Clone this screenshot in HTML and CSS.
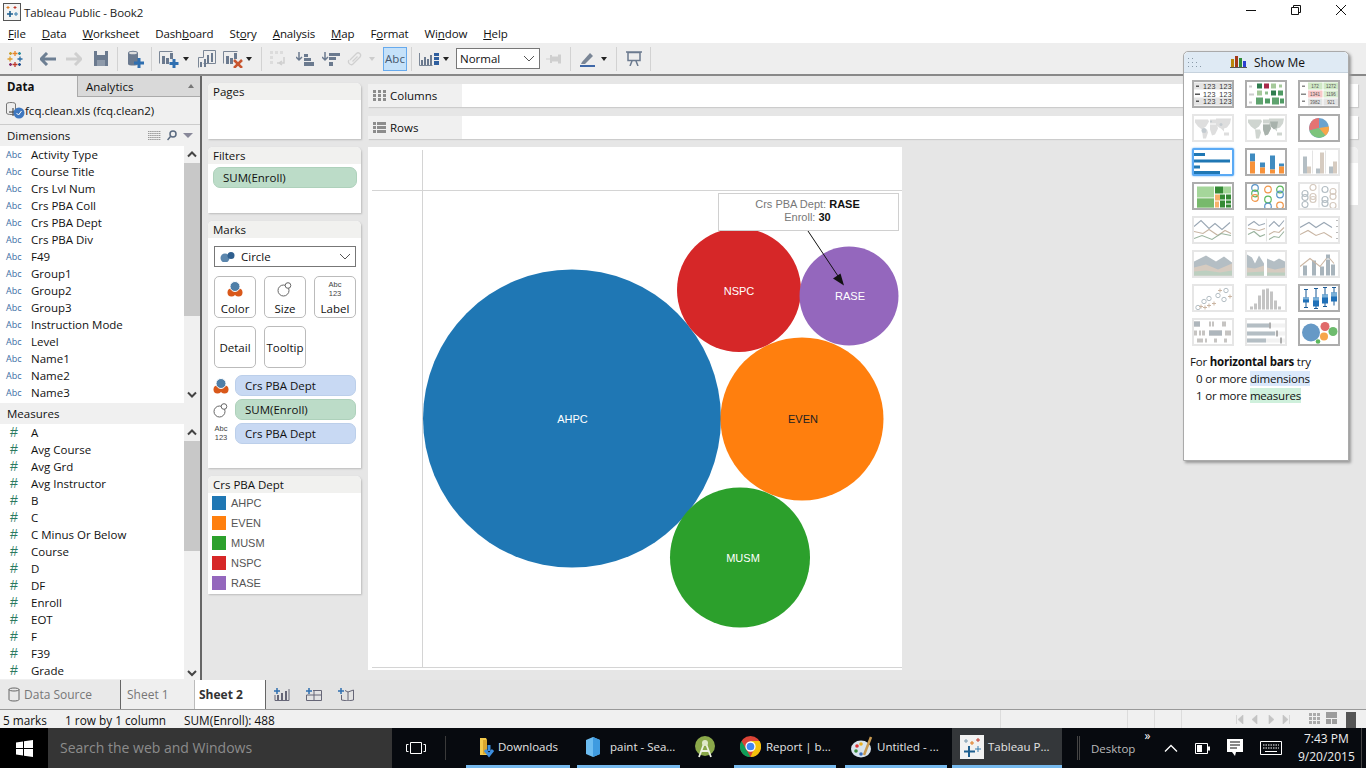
FILE: index.html
```html
<!DOCTYPE html>
<html lang="en">
<head>
<meta charset="utf-8">
<title>Tableau Public - Book2</title>
<link rel="stylesheet" href="styles.css">
</head>
<body>
<div class="app">
  <header class="titlebar">
    <svg class="app-icon" width="18" height="18" viewBox="0 0 18 18"><rect x=".5" y=".5" width="17" height="17" fill="#f4f4f4" stroke="#555"/><path d="M7 8v6M4 11h6" stroke="#1f5f8f" stroke-width="1.6"/><path d="M13 9v4M11 11h4" stroke="#3a7fb0"/><path d="M5 3v3M3.500 4.500h3" stroke="#e07b20"/><path d="M12 3v3M10.500 4.500h3" stroke="#c0392b"/></svg>
    <span class="title-text">Tableau Public - Book2</span>
    <div class="win-controls">
      <svg width="12" height="12" viewBox="0 0 12 12"><path d="M1 6.500h10" stroke="#111"/></svg>
      <svg width="12" height="12" viewBox="0 0 12 12"><path d="M1.500 3.500h7v7h-7zM3.500 3.500v-2h7v7h-2" fill="none" stroke="#111"/></svg>
      <svg width="12" height="12" viewBox="0 0 12 12"><path d="M1 1l10 10M11 1L1 11" stroke="#111"/></svg>
    </div>
  </header>
  <nav class="menubar">
    <span><u>F</u>ile</span><span><u>D</u>ata</span><span><u>W</u>orksheet</span><span>Dash<u>b</u>oard</span><span>St<u>o</u>ry</span><span><u>A</u>nalysis</span><span><u>M</u>ap</span><span>F<u>o</u>rmat</span><span>Wi<u>n</u>dow</span><span><u>H</u>elp</span>
  </nav>
  <div class="toolbar">
    <svg class="m7" width="16" height="16" viewBox="0 0 16 16" stroke-width="1.300"><path d="M8 0v5M5.500 2.500h5" stroke="#e8862a"/><path d="M8 11v5M5.500 13.500h5" stroke="#c0392b"/><path d="M3 5.500v5M.5 8h5" stroke="#e0a030"/><path d="M13 5.500v5M10.500 8h5" stroke="#2b6ca3"/><path d="M3.500 1v3M2 2.500h3" stroke="#c8a030"/><path d="M12.500 1v3M11 2.500h3" stroke="#2f8f9f"/><path d="M3.500 12v3M2 13.500h3" stroke="#8a2f6f"/><path d="M12.500 12v3M11 13.500h3" stroke="#1f4f8f"/></svg>
    <i class="sep m8"></i>
    <svg class="m8" width="16" height="14" viewBox="0 0 16 14"><path d="M7 1L1 7l6 6M1.500 7H16" fill="none" stroke="#6d7f93" stroke-width="3"/></svg>
    <svg class="m10" width="16" height="14" viewBox="0 0 16 14"><path d="M9 1l6 6-6 6M14.500 7H0" fill="none" stroke="#cfcfcf" stroke-width="3"/></svg>
    <svg class="m11" width="16" height="15" viewBox="0 0 16 15"><path d="M1 0h14v15H1z" fill="#6b7a8f"/><path d="M4 0h8v4H4z" fill="#eee"/><path d="M4 9h8v6H4z" fill="#8f9bab"/></svg>
    <i class="sep m8"></i>
    <svg class="m10" width="16" height="18" viewBox="0 0 16 18"><path d="M0 3c0-3 10-3 10 0v11c0 2-10 2-10 0z" fill="#6b7a8f"/><ellipse cx="5" cy="3" rx="4" ry="1.300" fill="#ddd"/><path d="M11 8v10M6 13h10" stroke="#2f6fb0" stroke-width="3"/></svg>
    <i class="sep m7"></i>
    <svg class="m7" width="20" height="18" viewBox="0 0 20 18"><path d="M.5 13.500V1.500h13" fill="none" stroke="#7a8696"/><path d="M3 6h3v8H3zM7 8h3v6H7zM11 3h3v6h-3z" fill="#6b7a8f"/><path d="M15 9v9M10.500 13.500h9" stroke="#2f6fb0" stroke-width="3"/></svg>
    <b class="dd m4"></b>
    <svg class="m9" width="18" height="18" viewBox="0 0 18 18"><path d="M.5 17.500v-10h5M5.500 7.500v-7h12v13h-12" fill="none" stroke="#7a8696"/><path d="M2 12h2v5H2zM6 9h2v8H6zM9 5h2v8H9zM13 3h2v9h-2z" fill="#6b7a8f"/></svg>
    <svg class="m7" width="20" height="18" viewBox="0 0 20 18"><path d="M.5 13.500V1.500h14" fill="none" stroke="#7a8696"/><path d="M3 6h3v8H3zM7 8h3v6H7zM11 3h3v6h-3z" fill="#6b7a8f"/><path d="M11 10l8 8M19 10l-8 8" stroke="#c8552f" stroke-width="2.500"/></svg>
    <b class="dd m3"></b>
    <i class="sep m9"></i>
    <svg class="m8" width="16" height="16" viewBox="0 0 16 16"><path d="M0 0h3v3H0zM5 0h3v3H5zM0 5h3v3H0zM0 10h3v3H0zM10 0h3v3h-3z" fill="#dcdcdc"/><path d="M14 6v6h-7M12 14l-3-2 3-2" fill="none" stroke="#cfcfcf" stroke-width="1.500"/></svg>
    <svg class="m10" width="18" height="14" viewBox="0 0 18 14"><path d="M3 0v8M0 5l3 3 3-3" fill="none" stroke="#6b7a8f" stroke-width="1.500"/><path d="M8 2h4v3H8zM8 6h7v3H8zM8 10h10v4H8z" fill="#6b7a8f"/></svg>
    <svg class="m8" width="18" height="14" viewBox="0 0 18 14"><path d="M3 0v8M0 5l3 3 3-3" fill="none" stroke="#6b7a8f" stroke-width="1.500"/><path d="M7 1h11v3H7zM7 5h7v3H7zM7 10h4v4H7z" fill="#6b7a8f"/></svg>
    <svg class="m7" width="15" height="16" viewBox="0 0 15 16"><path d="M3 9l6.500-6.500c2-2 5.500 1 3.500 3.500L6 13c-2 2-6-1-4-4M5.500 10.500l5-5" fill="none" stroke="#d0d0d0" stroke-width="1.300"/></svg>
    <b class="dd dd-off m7"></b>
    <span class="abc-btn m8">Abc</span>
    <i class="sep m4"></i>
    <svg class="m7" width="20" height="14" viewBox="0 0 20 14"><path d="M.5 1v12.500h13" fill="none" stroke="#7a8696"/><path d="M2 8h2v5H2zM5 5h2v8H5zM8 7h2v6H8zM11 3h2v10h-2z" fill="#6b7a8f"/><path d="M15 1h5v3h-5zM15 5h5v3h-5zM15 9h5v4h-5z" fill="#2f5f9f"/></svg>
    <b class="dd m4"></b>
    <div class="normal-select m7"><span>Normal</span><svg width="12" height="7" viewBox="0 0 12 7"><path d="M1 1l5 5 5-5" fill="none" stroke="#555"/></svg></div>
    <svg class="m6" width="15" height="10" viewBox="0 0 15 10"><path d="M0 4.500h4v1H0zM4 1h2v8H4zM6 2.500h6v5H6zM12 .5h3v9h-3z" fill="#cfcfcf"/></svg>
    <i class="sep m9"></i>
    <svg class="m9" width="16" height="16" viewBox="0 0 16 16"><path d="M2 11L10 2l3 3-8 8H1z" fill="#7a8696"/><path d="M0 15h15" stroke="#3f68a8" stroke-width="2"/></svg>
    <b class="dd m5"></b>
    <i class="sep m9"></i>
    <svg class="m9" width="16" height="15" viewBox="0 0 16 15"><path d="M0 1h16M2 1.500h12v8H2zM4 15l2-5M12 15l-2-5" fill="none" stroke="#6b7a8f" stroke-width="1.500"/></svg>
    <i class="sep m8"></i>
  </div>

  <main class="workspace">
    <aside class="data-pane">
      <div class="pane-tabs">
        <span class="pane-tab on">Data</span>
        <span class="pane-tab off">Analytics<i class="updown"></i></span>
      </div>
      <div class="source">
        <svg width="19" height="17" viewBox="0 0 19 17"><path d="M.5 11V2c0-2 9-2 9 0v9c0 2-9 2-9 0z" fill="#eee" stroke="#777"/><path d="M3 10h8M7 6v8" stroke="#333"/><circle cx="13" cy="11" r="5.500" fill="#3f78c0"/><path d="M10.500 11l2 2 3-4" fill="none" stroke="#fff"/></svg>
        <span>fcq.clean.xls (fcq.clean2)</span>
      </div>
      <div class="section-head">
        <span>Dimensions</span>
        <div class="head-tools">
          <svg width="13" height="9" viewBox="0 0 13 9"><path d="M0 .5h13M0 2.500h13M0 4.500h13M0 6.500h13M0 8.500h13" stroke="#999" stroke-dasharray="1.500 .6"/></svg>
          <svg width="10" height="11" viewBox="0 0 10 11"><circle cx="6" cy="4" r="3" fill="none" stroke="#5a6a80" stroke-width="1.500"/><path d="M3.500 6.500L.5 10" stroke="#5a6a80" stroke-width="1.500"/></svg>
          <b class="dd dd-gray"></b>
        </div>
      </div>
      <div class="list-wrap dims">
        <ul class="field-list">
          <li><span class="ty abc">Abc</span>Activity Type</li>
          <li><span class="ty abc">Abc</span>Course Title</li>
          <li><span class="ty abc">Abc</span>Crs Lvl Num</li>
          <li><span class="ty abc">Abc</span>Crs PBA Coll</li>
          <li><span class="ty abc">Abc</span>Crs PBA Dept</li>
          <li><span class="ty abc">Abc</span>Crs PBA Div</li>
          <li><span class="ty abc">Abc</span>F49</li>
          <li><span class="ty abc">Abc</span>Group1</li>
          <li><span class="ty abc">Abc</span>Group2</li>
          <li><span class="ty abc">Abc</span>Group3</li>
          <li><span class="ty abc">Abc</span>Instruction Mode</li>
          <li><span class="ty abc">Abc</span>Level</li>
          <li><span class="ty abc">Abc</span>Name1</li>
          <li><span class="ty abc">Abc</span>Name2</li>
          <li><span class="ty abc">Abc</span>Name3</li>
        </ul>
        <div class="scrollbar">
          <svg class="sb-arrow" width="16" height="17" viewBox="0 0 16 17"><path d="M4 10.500l4-4 4 4" fill="none" stroke="#444" stroke-width="2"/></svg>
          <div class="thumb thumb-dim"></div>
          <svg class="sb-arrow sb-end" width="16" height="17" viewBox="0 0 16 17"><path d="M4 6.500l4 4 4-4" fill="none" stroke="#444" stroke-width="2"/></svg>
        </div>
      </div>
      <div class="section-head"><span>Measures</span></div>
      <div class="list-wrap meas">
        <ul class="field-list">
          <li><span class="ty hash">#</span>A</li>
          <li><span class="ty hash">#</span>Avg Course</li>
          <li><span class="ty hash">#</span>Avg Grd</li>
          <li><span class="ty hash">#</span>Avg Instructor</li>
          <li><span class="ty hash">#</span>B</li>
          <li><span class="ty hash">#</span>C</li>
          <li><span class="ty hash">#</span>C Minus Or Below</li>
          <li><span class="ty hash">#</span>Course</li>
          <li><span class="ty hash">#</span>D</li>
          <li><span class="ty hash">#</span>DF</li>
          <li><span class="ty hash">#</span>Enroll</li>
          <li><span class="ty hash">#</span>EOT</li>
          <li><span class="ty hash">#</span>F</li>
          <li><span class="ty hash">#</span>F39</li>
          <li><span class="ty hash">#</span>Grade</li>
        </ul>
        <div class="scrollbar">
          <svg class="sb-arrow" width="16" height="17" viewBox="0 0 16 17"><path d="M4 10.500l4-4 4 4" fill="none" stroke="#444" stroke-width="2"/></svg>
          <div class="thumb thumb-meas"></div>
          <svg class="sb-arrow sb-end" width="16" height="12" viewBox="0 0 16 12"><path d="M4 4l4 4 4-4" fill="none" stroke="#444" stroke-width="2"/></svg>
        </div>
      </div>
    </aside>

    <section class="cards">
      <div class="card card-pages"><h3>Pages</h3></div>
      <div class="card card-filters"><h3>Filters</h3><div class="pill green pill-filter">SUM(Enroll)</div></div>
      <div class="card card-marks">
        <h3>Marks</h3>
        <div class="mark-select">
          <svg width="15" height="10" viewBox="0 0 15 10"><circle cx="5" cy="6" r="4.500" fill="#5b86ad"/><circle cx="11" cy="3.500" r="3.500" fill="#2f5f8f"/></svg>
          <span>Circle</span>
          <svg class="chev" width="12" height="7" viewBox="0 0 12 7"><path d="M1 1l5 5 5-5" fill="none" stroke="#555"/></svg>
        </div>
        <div class="mark-buttons">
          <div class="mbtn">
            <svg width="16" height="16" viewBox="0 0 16 16"><circle cx="4.500" cy="11.500" r="4" fill="#d9581a"/><circle cx="11.500" cy="11.500" r="4" fill="#d9581a"/><circle cx="8" cy="5.500" r="5" fill="#4f7fa8" stroke="#fff"/></svg>
            <span>Color</span>
          </div>
          <div class="mbtn">
            <svg width="16" height="16" viewBox="0 0 16 16"><circle cx="6.500" cy="9.500" r="5.500" fill="none" stroke="#666"/><circle cx="11" cy="4.500" r="2.800" fill="#fff" stroke="#666"/></svg>
            <span>Size</span>
          </div>
          <div class="mbtn">
            <span class="abc123">Abc<br>123</span>
            <span>Label</span>
          </div>
          <div class="mbtn mbtn-plain"><span>Detail</span></div>
          <div class="mbtn mbtn-plain"><span>Tooltip</span></div>
        </div>
        <div class="mark-row">
          <svg width="16" height="16" viewBox="0 0 16 16"><circle cx="4.500" cy="11.500" r="4" fill="#d9581a"/><circle cx="11.500" cy="11.500" r="4" fill="#d9581a"/><circle cx="8" cy="5.500" r="5" fill="#4f7fa8" stroke="#fff"/></svg>
          <div class="pill blue">Crs PBA Dept</div>
        </div>
        <div class="mark-row">
          <svg width="16" height="16" viewBox="0 0 16 16"><circle cx="6.500" cy="9.500" r="5.500" fill="none" stroke="#666"/><circle cx="11" cy="4.500" r="2.800" fill="#fff" stroke="#666"/></svg>
          <div class="pill green">SUM(Enroll)</div>
        </div>
        <div class="mark-row">
          <span class="abc123 tiny">Abc<br>123</span>
          <div class="pill blue">Crs PBA Dept</div>
        </div>
      </div>
      <div class="card card-legend">
        <h3>Crs PBA Dept</h3>
        <ul class="legend">
          <li><i class="sw c-blue"></i>AHPC</li>
          <li><i class="sw c-orange"></i>EVEN</li>
          <li><i class="sw c-green"></i>MUSM</li>
          <li><i class="sw c-red"></i>NSPC</li>
          <li><i class="sw c-purple"></i>RASE</li>
        </ul>
      </div>
    </section>

    <section class="sheet">
      <div class="shelf">
        <div class="shelf-label">
          <svg width="13" height="11" viewBox="0 0 13 11"><path d="M0 0h3v11H0zM5 0h3v11H5zM10 0h3v11h-3z" fill="#8d8d8d"/><path d="M0 3.500h13M0 7.500h13" stroke="#f0f0f0"/></svg>
          <span>Columns</span>
        </div>
      </div>
      <div class="shelf">
        <div class="shelf-label">
          <svg width="13" height="11" viewBox="0 0 13 11"><path d="M0 0h13v3H0zM0 4h13v3H0zM0 8h13v3H0z" fill="#8d8d8d"/><path d="M3.500 0v11" stroke="#f0f0f0"/></svg>
          <span>Rows</span>
        </div>
      </div>
      <div class="sheet-body">
        <div class="canvas">
          <svg width="534" height="523" viewBox="0 0 534 523">
            <path d="M4 43.500h530M54.500 3v517M4 520.500h530" stroke="#d4d4d4" fill="none"/>
            <circle cx="204" cy="271.500" r="149" fill="#1f77b4"/>
            <circle cx="434" cy="272" r="81.500" fill="#ff7f0e"/>
            <circle cx="372" cy="410.500" r="70" fill="#2ca02c"/>
            <circle cx="371" cy="143" r="62" fill="#d62728"/>
            <circle cx="481" cy="149" r="49.500" fill="#9467bd"/>
            <text class="lbl" x="204.500" y="276" fill="#fff">AHPC</text>
            <text class="lbl" x="435" y="276" fill="#222">EVEN</text>
            <text class="lbl" x="375" y="415" fill="#fff">MUSM</text>
            <text class="lbl" x="371" y="148" fill="#fff">NSPC</text>
            <text class="lbl" x="482" y="153" fill="#fff">RASE</text>
            <rect x="350.500" y="46.500" width="180" height="37" fill="#fff" stroke="#d0d0d0"/>
            <text class="lbl tip" x="439.500" y="61">Crs PBA Dept: <tspan class="tip-b">RASE</tspan></text>
            <text class="lbl tip" x="439.500" y="74">Enroll: <tspan class="tip-b">30</tspan></text>
            <path d="M440 84l32 48" stroke="#111"/>
            <path d="M476 138.500l-11-7 7.500-5z" fill="#111"/>
          </svg>
        </div>
        <div class="hidden-card"><div class="hidden-card-head"></div></div>
      </div>
    </section>
  </main>

  <div class="tabbar">
    <div class="tab tab-ds">
      <svg width="12" height="15" viewBox="0 0 12 15"><path d="M1 2.500c0-2 10-2 10 0v10c0 2-10 2-10 0zM1 2.500c0 2 10 2 10 0" fill="none" stroke="#666"/></svg>
      <span>Data Source</span>
    </div>
    <div class="tab tab-s1">Sheet 1</div>
    <div class="tab tab-s2">Sheet 2</div>
    <div class="tab-tools">
      <svg width="16" height="13" viewBox="0 0 16 13"><path d="M0 3h6M3 0v6" stroke="#2f6fb0" stroke-width="1.500"/><path d="M1 7v5.500h14V1" fill="none" stroke="#667"/><path d="M3 7h2v5H3zM7 5h2v7H7zM11 3h2v9h-2z" fill="#667"/></svg>
      <svg width="16" height="13" viewBox="0 0 16 13"><path d="M0 3h6M3 0v6" stroke="#2f6fb0" stroke-width="1.500"/><path d="M7 2.500h8.500v10H.5V7M.5 7h15M8 3v9" fill="none" stroke="#667"/></svg>
      <svg width="16" height="13" viewBox="0 0 16 13"><path d="M0 3h6M3 0v6" stroke="#2f6fb0" stroke-width="1.500"/><path d="M7 2.500L10 4l5.500-2v10L10 13 3.500 12V7M10 4v9" fill="none" stroke="#667"/></svg>
    </div>
  </div>

  <div class="statusbar">
    <span class="st st1">5 marks</span>
    <span class="st st2">1 row by 1 column</span>
    <span class="st st3">SUM(Enroll): 488</span>
    <div class="st-right">
      <i class="st-sep sp1"></i><i class="st-sep sp2"></i><i class="st-sep sp3"></i><i class="st-sep sp4"></i>
      <svg class="nav" width="54" height="9" viewBox="0 0 54 9"><path d="M.5 0v9M7 0L2 4.500 7 9zM21 0l-5 4.500L21 9zM33 0l5 4.500L33 9zM47 0l5 4.500L47 9zM53.500 0v9" fill="#c4c4c4" stroke="#c4c4c4" stroke-width=".6"/></svg>
      <svg class="views" width="48" height="18" viewBox="0 0 48 18"><path d="M1 3h3v3H1zM5 3h3v3H5zM9 3h3v3H9zM1 7h3v3H1zM5 7h3v3H5zM9 7h3v3H9zM1 11h3v3H1zM5 11h3v3H5zM9 11h3v3H9z" fill="#aaa"/><path d="M18 2h11v6H18zM18 9h5v5h-5zM24 9h5v5h-5z" fill="#9c9c9c"/><path d="M38 2h10v16H38z" fill="#555"/></svg>
    </div>
  </div>

  <footer class="taskbar">
    <div class="start">
      <svg width="17" height="17" viewBox="0 0 17 17"><path d="M0 2.500l7-1v6.500H0zM8 1.300L17 0v8H8zM0 9h7v6.500l-7-1zM8 9h9v8l-9-1.300z" fill="#fff"/></svg>
    </div>
    <div class="search">Search the web and Windows</div>
    <div class="taskview">
      <svg width="20" height="14" viewBox="0 0 20 14"><path d="M4.500 1.500h11v11h-11zM2.500 3.500h-2v7h2M17.500 3.500h2v7h-2" fill="none" stroke="#fff"/></svg>
    </div>
    <i class="tb-sep"></i>
    <div class="task t-dl open">
      <svg width="18" height="22" viewBox="0 0 18 22"><path d="M2 2h6l1 2v15H2z" fill="#f2c94c"/><path d="M5 4h4v14H5z" fill="#d9a62e"/><path d="M11 9v6M7 14l4 5 4-5" fill="none" stroke="#3d8fe0" stroke-width="3"/></svg>
      <span>Downloads</span>
    </div>
    <div class="task t-paint open">
      <svg width="16" height="22" viewBox="0 0 16 22"><path d="M8 1l7 3v14l-7 3-7-3V4z" fill="#6cbcf0"/><path d="M8 1l7 3v14l-7 3z" fill="#3f9be0"/></svg>
      <span>paint - Sea...</span>
    </div>
    <div class="task t-android">
      <svg width="22" height="24" viewBox="0 0 22 24"><circle cx="11" cy="11" r="10" fill="#8aa84a"/><path d="M11 6l-6 16M11 6l6 16M7 16h8" stroke="#eef2e4" stroke-width="1.800" fill="none"/><circle cx="11" cy="8" r="3" fill="#dfe8c8"/></svg>
    </div>
    <div class="task t-report open">
      <svg width="21" height="21" viewBox="0 0 21 21"><circle cx="10.500" cy="10.500" r="10.500" fill="#db4437"/><path d="M10.500 21A10.500 10.500 0 0 1 1.500 5l5 9z" fill="#0f9d58"/><path d="M10.500 21a10.500 10.500 0 0 0 9-16h-9l4 7z" fill="#f4c20d"/><circle cx="10.500" cy="10.500" r="4.500" fill="#4285f4" stroke="#fff" stroke-width="1.300"/></svg>
      <span>Report | b...</span>
    </div>
    <div class="task t-untitled open">
      <svg width="24" height="24" viewBox="0 0 24 24"><ellipse cx="10" cy="14" rx="10" ry="8.500" fill="#d8e4ee"/><circle cx="6" cy="11" r="1.800" fill="#d33"/><circle cx="10" cy="9" r="1.800" fill="#e9b020"/><circle cx="5" cy="16" r="1.800" fill="#3a8a3a"/><circle cx="10" cy="19" r="1.800" fill="#3a6ec0"/><path d="M13 20L20 2" stroke="#c89a50" stroke-width="2.500"/></svg>
      <span>Untitled - ...</span>
    </div>
    <div class="task t-tableau active">
      <svg width="24" height="24" viewBox="0 0 24 24"><rect width="24" height="24" fill="#f2f2f2"/><path d="M9 11v11M4 16.500h11" stroke="#1f5f8f" stroke-width="2"/><path d="M18 11v6M15 14h6" stroke="#3a7fb0"/><path d="M6 4v4M4 6h4" stroke="#7a9ab0"/><path d="M12 6v4M10 8h4" stroke="#e07b20"/><path d="M18 3v4M16 5h4" stroke="#c0392b"/></svg>
      <span>Tableau P...</span>
    </div>
    <i class="tb-sep2"></i>
    <span class="desktop">Desktop</span>
    <span class="chevrons">»</span>
    <div class="tray">
      <svg width="14" height="8" viewBox="0 0 14 8"><path d="M1 7.500l6-6 6 6" fill="none" stroke="#fff" stroke-width="1.300"/></svg>
      <svg width="15" height="11" viewBox="0 0 15 11"><path d="M.5.500h12v10H.5z" fill="none" stroke="#fff"/><path d="M2 2h5v7H2zM13 3.500h2v4h-2z" fill="#fff"/></svg>
      <svg width="16" height="18" viewBox="0 0 16 18"><path d="M0 0h16v13H9l-1 4-3-4H0z" fill="#fff"/><path d="M3 3h10M3 6h10M3 9h7" stroke="#111"/></svg>
      <svg width="22" height="14" viewBox="0 0 22 14"><path d="M.5.500h21v13H.5z" fill="none" stroke="#fff"/><path d="M3 4h16M3 7h16" stroke="#fff" stroke-dasharray="1.500 1"/><path d="M5 10.500h12" stroke="#fff"/></svg>
    </div>
    <div class="clock"><span>7:43 PM</span><span>9/20/2015</span></div>
    <i class="show-desktop"></i>
  </footer>

  <aside class="showme">
    <div class="sm-head">
      <svg class="grip" width="14" height="14" viewBox="0 0 14 14"><path d="M1 1h1v1H1zM5 1h1v1H5zM1 5h1v1H1zM5 5h1v1H5zM9 5h1v1H9zM1 9h1v1H1zM5 9h1v1H5zM9 9h1v1H9zM13 9h1v1h-1z" fill="#8a9aa8"/></svg>
      <svg width="17" height="12" viewBox="0 0 17 12"><path d="M1 3h3v8H1z" fill="#b8860b"/><path d="M5 0h3v11H5z" fill="#a33a1a"/><path d="M9 2h3v9H9z" fill="#2e8b3a"/><path d="M13 5h3v6h-3z" fill="#2a3fd0"/><path d="M0 11.500h17" stroke="#555"/></svg>
      <span>Show Me</span>
    </div>
    <div class="sm-grid">
      <div class="th on"><svg viewBox="0 0 38 23"><path d="M0 0h38v7H0zM0 15h38v8H0z" fill="#e4e4e4"/><path d="M2 3h3v1.500H2zM1 11h5v1.500H1zM2 18h3v1.500H2z" fill="#555"/><text class="t123" x="9" y="6">123 123</text><text class="t123" x="9" y="14">123 123</text><text class="t123" x="9" y="21.500">123 123</text></svg></div>
      <div class="th on"><svg viewBox="0 0 38 23"><path d="M2 3h3v2H2z M2 11h5v2H2zM2 19h3v2H2z" fill="#ccc"/><path d="M10 1h5v5h-5z" fill="#2f7d4f"/><path d="M17 1h5v5h-5z" fill="#a82a4a"/><path d="M24 1h5v5h-5z" fill="#a5c99a"/><path d="M32 2h3v3h-3z" fill="#a5c99a"/><path d="M10 8h5v5h-5z" fill="#a5c99a"/><path d="M18 9h3v3h-3z" fill="#8fbf8f"/><path d="M24 8h5v5h-5z" fill="#2f7d4f"/><path d="M31 8h5v5h-5z" fill="#4f9a63"/><path d="M9 15h7v7H9z" fill="#5fa36f"/><path d="M18 16h5v5h-5z" fill="#4f9a63"/><path d="M25 15h7v7h-7z" fill="#5fa36f"/><path d="M33 16h4v5h-4z" fill="#4f9a63"/></svg></div>
      <div class="th on"><svg viewBox="0 0 38 23"><path d="M8 0h14.500v7H8z" fill="#cfe8c4"/><path d="M23.500 0H38v7H23.500z" fill="#cfe8c4"/><path d="M8 8h14.500v7H8z" fill="#f8c8c8"/><path d="M23.500 8H38v7H23.500z" fill="#d8ecd0"/><path d="M8 16h14.500v7H8zM23.500 16H38v7H23.500z" fill="#e4e4e4"/><path d="M2 3h3v1.500H2zM1 11h5v1.500H1zM2 18h3v1.500H2z" fill="#888"/><text class="t6" x="15" y="5.500">172</text><text class="t6" x="31" y="5.500">1272</text><text class="t6" x="15" y="13.500">1341</text><text class="t6" x="31" y="13.500">1196</text><text class="t6" x="15" y="21.500">3982</text><text class="t6" x="31" y="21.500">921</text></svg></div>

      <div class="th off"><svg viewBox="0 0 38 23"><path d="M1 3h13l1 2-3 5-3 2-1 1-4-3-3-4zM8 13h5l1 3-2 6H9zM16 3h6v4h-6zM16 8h7l1 4-3 6-3 1-2-6zM22 2h15l-1 5-3 4-3 1v3l-3-3-2-1-3-3zM30 16h5v3h-5z" fill="#dedede"/><circle cx="10" cy="14" r="2.500" fill="#c4cbd0"/><circle cx="27" cy="8" r="1.500" fill="#c4cbd0"/><circle cx="17" cy="5" r="1" fill="#c4cbd0"/></svg></div>
      <div class="th off"><svg viewBox="0 0 38 23"><path d="M1 3h13l1 2-3 5-3 2-1 1-4-3-3-4zM8 13h5l1 3-2 6H9zM16 3h6v4h-6zM16 8h7l1 4-3 6-3 1-2-6zM22 2h15l-1 5-3 4-3 1v3l-3-3-2-1-3-3zM30 16h5v3h-5z" fill="#cfd5d0"/><path d="M16 8h7l1 4-3 6-3 1-2-6zM23 5h8l-1 6-3 2-3-3z" fill="#a8b2ac"/></svg></div>
      <div class="th on"><svg viewBox="0 0 38 23"><circle cx="19" cy="11.500" r="10" fill="#6ba3cf"/><path d="M19 11.500L19 1.500A10 10 0 0 0 10 7.500 10 10 0 0 0 9.500 14z" fill="#e57373"/><path d="M19 11.500L9.500 14A10 10 0 0 0 25.500 19z" fill="#7cc47c"/><path d="M19 11.500L25.500 19A10 10 0 0 0 29 10L19 11.500z" fill="#f7a64a"/></svg></div>

      <div class="th sel"><svg viewBox="0 0 38 24"><path d="M0 3h11v3H0zM0 9.500h36v3H0zM0 15.500h6v3H0zM0 21h26v3H0z" fill="#1f77b4"/></svg></div>
      <div class="th on"><svg viewBox="0 0 38 23"><path d="M3 3h5v8H3zM13 12h5v5h-5zM23 5h5v14h-5zM32 13h5v3h-5z" fill="#3f8bc0"/><path d="M3 11h5v12H3zM13 17h5v6h-5zM23 19h5v4h-5zM32 16h5v7h-5z" fill="#f7923a"/></svg></div>
      <div class="th off"><svg viewBox="0 0 38 23"><path d="M12.500 0v23M25.500 0v23" stroke="#e4e4e4"/><path d="M3 6h4v17H3zM16 18h4v5h-4zM29 16h4v7h-4z" fill="#b4bec4"/><path d="M7 16h4v7H7zM20 2h4v21h-4zM33 11h4v12h-4z" fill="#d6cbc0"/></svg></div>

      <div class="th on"><svg viewBox="0 0 38 23"><path d="M3 2h17v11H3zM29 2h8v7h-8zM3 14h17v9H3z" fill="#a5d69a"/><path d="M3 14h17v9H3z" fill="#78b96c"/><path d="M21 2h8v7h-8zM26 10h5v5h-5zM32 10h5v5h-5zM26 16h5v7h-5zM32 16h5v3h-5zM32 20h5v3h-5z" fill="#358a35"/><path d="M21 10h5v6h-5zM21 17h4v6h-4z" fill="#f7b26a"/></svg></div>
      <div class="th on"><svg viewBox="0 0 38 23" fill="none" stroke-width="1.200"><circle cx="8" cy="3.500" r="3.300" stroke="#5a94c8"/><circle cx="8" cy="9" r="3.300" stroke="#5cb85c"/><circle cx="8" cy="13.500" r="3.300" stroke="#f0964a"/><circle cx="21" cy="5" r="3.300" stroke="#f0964a"/><circle cx="21" cy="15" r="3.300" stroke="#5cb85c"/><circle cx="21" cy="22" r="3.300" stroke="#5a94c8"/><circle cx="33" cy="5" r="3.300" stroke="#5cb85c"/><circle cx="33" cy="10" r="3.300" stroke="#5a94c8"/><circle cx="33" cy="21" r="3.300" stroke="#f0964a"/></svg></div>
      <div class="th off"><svg viewBox="0 0 38 23" fill="none" stroke-width="1.200"><path d="M19 0v23" stroke="#e4e4e4"/><circle cx="5" cy="9" r="3" stroke="#b4bec4"/><circle cx="5" cy="13" r="3" stroke="#b4bec4"/><circle cx="5" cy="20" r="3" stroke="#b4bec4"/><circle cx="13" cy="3" r="3" stroke="#d6cbc0"/><circle cx="13" cy="12" r="3" stroke="#d6cbc0"/><circle cx="13" cy="15" r="3" stroke="#d6cbc0"/><circle cx="25" cy="5" r="3" stroke="#b4bec4"/><circle cx="25" cy="15" r="3" stroke="#b4bec4"/><circle cx="25" cy="19" r="3" stroke="#b4bec4"/><circle cx="33" cy="7" r="3" stroke="#d6cbc0"/><circle cx="33" cy="12" r="3" stroke="#d6cbc0"/><circle cx="33" cy="21" r="3" stroke="#d6cbc0"/></svg></div>

      <div class="th off"><svg viewBox="0 0 38 23" fill="none" stroke-width="1.100"><path d="M0 8l7-6 8 8 6-5 7 6 8-7" stroke="#9aa7b4"/><path d="M0 13l9 2 6-4 9 6 7-5 6 3" stroke="#c8b5a3"/><path d="M0 20l8-3 10 4 9-6 10 2" stroke="#9ab39e"/></svg></div>
      <div class="th off"><svg viewBox="0 0 38 23" fill="none" stroke-width="1.100"><path d="M19.500 0v23" stroke="#e4e4e4"/><path d="M1 7l6-4 5 4 6-2M22 8l5-5 5 5 5-6" stroke="#9aa7b4"/><path d="M1 10l6 1 5 1 6-2M22 16l5-3 5 1 5-5" stroke="#c8b5a3"/><path d="M1 16l6-3 6 5 5-2M22 21l5-3 5 1 5-6" stroke="#9ab39e"/></svg></div>
      <div class="th off"><svg viewBox="0 0 38 23" fill="none" stroke-width="1.100"><path d="M0 9l9-5 7 5 8-5 8 5" stroke="#9aa7b4"/><path d="M0 16l8-4 8 5 8-3 8 5" stroke="#c8b5a3"/><path d="M36 2h2M36 8h2M36 14h2M36 20h2" stroke="#bbb"/></svg></div>

      <div class="th off"><svg viewBox="0 0 38 23"><path d="M0 9l12-6 10 6 8-5 8 6v13H0z" fill="#b4bec4"/><path d="M0 15l12-3 12 5 14-6v12H0z" fill="#d6cbc0"/><path d="M0 19l12-1 14 2 12-2v5H0z" fill="#bccfc0"/></svg></div>
      <div class="th off"><svg viewBox="0 0 38 23"><path d="M0 2l5 3 3 6 4-8 5 8v12H0z" fill="#b4bec4"/><path d="M20 6l7 3 5-3 6 3v14H20z" fill="#b4bec4"/><path d="M0 15l8 1 9-3v10H0zM20 15l8 2 10-2v8H20z" fill="#d6cbc0"/><path d="M0 20l17-1v4H0zM20 20h18v3H20z" fill="#bccfc0"/><path d="M18.500 0v23" stroke="#fff" stroke-width="2"/></svg></div>
      <div class="th off"><svg viewBox="0 0 38 23"><path d="M3 13h4v10H3zM12 8h4v15h-4zM20 14h4v9h-4zM26 7h4v16h-4zM31 12h4v11h-4z" fill="#a8b4bc"/><path d="M0 14l10-8 10 8 8-10 6 7" fill="none" stroke="#cbb6a3" stroke-width="1.100"/><path d="M26 2h4v4h-4z" fill="#a8b4bc"/></svg></div>

      <div class="th off"><svg viewBox="0 0 38 23" fill="none" stroke-width="1"><g stroke="#b4bec4"><circle cx="4" cy="21" r="2.200"/><circle cx="10" cy="15" r="2.200"/><circle cx="15" cy="12" r="2.200"/><circle cx="24" cy="9" r="2.200"/><circle cx="30" cy="13" r="2.200"/><circle cx="32" cy="4" r="2.200"/></g><path d="M7 18v4M5 20h4M11 19v4M15 17v4M13 19h4M20 15v4M18 17h4M26 2v4M24 4h4M36 8v4M34 10h4M9 21h4" stroke="#cbb6a3"/></svg></div>
      <div class="th off"><svg viewBox="0 0 38 23"><path d="M3 20h3v3H3zM7 17h3v6H7zM11 9h3v14h-3zM15 3h3v20h-3zM19 2h3v21h-3zM23 5h3v18h-3zM27 14h3v9h-3zM31 20h3v3h-3z" fill="#c4c4c4"/></svg></div>
      <div class="th on"><svg viewBox="0 0 38 23"><path d="M6 3v18M4 3h4M4 21h4M16 2v20M14 2h4M14 22h4M25 1v19M23 1h4M23 20h4M34 1v18M32 1h4" stroke="#1a5a96" stroke-width="1" fill="none"/><path d="M3 11h6v5H3zM13 11h6v9h-6zM22 8h6v9h-6zM31 6h6v9h-6z" fill="#1f70b8"/><path d="M3 11h6v2H3zM13 11h6v3h-6zM22 8h6v3h-6zM31 6h6v4h-6z" fill="#7ab0d8"/></svg></div>

      <div class="th off"><svg viewBox="0 0 38 23"><path d="M0 1h6v5H0zM15 1h2v5h-2zM18 1h2v5h-2zM28 1h4v5h-4zM0 10h3v5H0zM5 10h2v5H5zM8 10h3v5H8zM15 10h13v5H15zM31 10h6v5h-6zM3 18h6v4H3zM11 18h2v4h-2zM20 18h3v4h-3zM30 18h3v4h-3z" fill="#c6c4c2"/><path d="M0 1h6v5H0zM15 10h13v5H15z" fill="#aeb6bc"/></svg></div>
      <div class="th off"><svg viewBox="0 0 38 23"><path d="M0 3h38v4H0zM0 11h38v4H0zM0 18h38v4H0z" fill="#f2f2f2"/><path d="M0 3h22v4H0zM0 11h28v4H0zM0 18h19v4H0z" fill="#b4bec4"/><path d="M23 2v6M30 10v6M34 17v6" stroke="#666"/></svg></div>
      <div class="th on"><svg viewBox="0 0 38 23"><circle cx="11" cy="12" r="9" fill="#6699c6"/><circle cx="25" cy="6" r="4.500" fill="#e06a6a"/><circle cx="24" cy="16" r="4" fill="#f7a64a"/><circle cx="33" cy="11" r="4.500" fill="#6dbb6d"/><circle cx="18" cy="21" r="2.300" fill="#5cb85c"/></svg></div>
    </div>
    <div class="sm-hint">
      <p>For <b>horizontal bars</b> try</p>
      <p class="ind">0 or more <mark class="hl-dim">dimensions</mark></p>
      <p class="ind">1 or more <mark class="hl-mea">measures</mark></p>
    </div>
  </aside>
</div>
</body>
</html>
```

FILE: styles.css
```css
* { box-sizing: border-box; }
html, body { margin: 0; padding: 0; }
body { width: 1366px; height: 768px; overflow: hidden; background: #fff; }
.app {
  position: relative;
  width: 1366px; height: 768px;
  display: flex; flex-direction: column;
  font-family: "Open Sans", "Noto Sans", sans-serif;
  font-size: 11.5px; color: #111; overflow: hidden;
}
ul { list-style: none; margin: 0; padding: 0; }
p { margin: 0; }
svg { display: block; flex: none; }

.titlebar { height: 24px; display: flex; align-items: center; padding: 0 19px 0 3px; background: #fff; }
.app-icon { margin-right: 3px; }
.title-text { font-size: 11.5px; color: #222; letter-spacing: -.1px; }
.win-controls { margin-left: auto; display: flex; gap: 33px; margin-top: -4px; }

.menubar { height: 19px; display: flex; gap: 16px; padding-left: 8px; align-items: center; background: #fff; font-size: 11.5px; letter-spacing: -.12px; }

.toolbar { height: 33px; display: flex; align-items: center; background: #eee; border-bottom: 2px solid #888; }
.sep { display: block; width: 1px; height: 24px; background: #d2d2d2; flex: none; }
.dd { display: block; width: 0; height: 0; border-left: 3.5px solid transparent; border-right: 3.5px solid transparent; border-top: 4px solid #222; flex: none; }
.dd-off { border-top-color: #ccc; }
.dd-gray { border-left-width: 5px; border-right-width: 5px; border-top: 5px solid #889; }
.m3 { margin-left: 3px; } .m4 { margin-left: 4px; } .m5 { margin-left: 5px; } .m6 { margin-left: 6px; }
.m7 { margin-left: 7px; } .m8 { margin-left: 8px; } .m9 { margin-left: 9px; } .m10 { margin-left: 10px; } .m11 { margin-left: 11px; }
.abc-btn { width: 24px; height: 24px; background: #c5e1f9; border: 1px solid #66aaee; color: #45586e; font-size: 11.5px; line-height: 22px; text-align: center; flex: none; }
.normal-select { width: 84px; height: 21px; display: flex; align-items: center; justify-content: space-between; padding: 0 4px 0 3px; background: #fff; border: 1px solid #777; flex: none; }

.workspace { height: 604px; display: flex; background: #e6e6e6; }

.data-pane { width: 202px; flex: none; background: #f0f0f0; border-right: 2px solid #666; }
.pane-tabs { height: 21px; display: flex; }
.pane-tab { display: flex; align-items: center; }
.pane-tab.on { width: 77px; padding-left: 7px; font-weight: 700; }
.pane-tab.off { flex: 1; padding-left: 8px; background: #d9d9d9; border-left: 1px solid #aaa; border-bottom: 1px solid #aaa; position: relative; }
.updown { display: block; margin-left: auto; margin-right: 6px; width: 0; height: 0; border-left: 3px solid transparent; border-right: 3px solid transparent; border-bottom: 4px solid #777; }
.source { height: 28px; display: flex; align-items: center; padding-left: 6px; border-bottom: 1px solid #ccc; }
.source svg { margin-right: 0; }
.section-head { height: 21px; display: flex; align-items: center; justify-content: space-between; padding: 0 7px; background: #f0f0f0; }
.head-tools { display: flex; align-items: center; gap: 6px; }
.list-wrap { display: flex; background: #fff; }
.dims { height: 257px; }
.meas { height: 255px; }
.field-list { flex: 1; overflow: hidden; }
.field-list li { height: 17px; line-height: 17px; display: flex; white-space: nowrap; }
.ty { width: 31px; flex: none; padding-left: 6px; }
.abc { font-size: 9px; color: #3a6ea5; }
.hash { font: 14px/17px "Liberation Sans", Arial, sans-serif; color: #2a7a5f; padding-left: 10px; }
.scrollbar { width: 16px; flex: none; background: #f0f0f0; display: flex; flex-direction: column; }
.thumb { background: #c8c8c8; }
.thumb-dim { height: 153px; }
.thumb-meas { height: 110px; }
.sb-end { margin-top: auto; }

.cards { width: 166px; flex: none; padding: 7px 7px 0 6px; display: flex; flex-direction: column; gap: 8px; }
.card { background: #fff; border-radius: 5px 5px 0 0; box-shadow: 1px 1px 2px #bbb; }
.card h3 { margin: 0; height: 17px; padding-left: 5px; font-size: 11.5px; font-weight: 400; line-height: 17px; background: #f1f1ef; border-radius: 5px 5px 0 0; }
.card-pages { height: 56px; }
.card-filters { height: 66px; }
.card-marks { height: 247px; }
.card-legend { height: 118px; }
.pill { height: 21px; flex: 1; padding-left: 9px; line-height: 20px; border-radius: 7px; border: 1px solid #c6d6e6; }
.pill.green { background: #bcdcc8; border-color: #aed1bb; }
.pill.blue { background: #c8d9f3; border-color: #bccfea; }
.pill-filter { margin: 3px 4px 0 5px; }
.mark-select { margin: 8px 5px 0 6px; height: 21px; display: flex; align-items: center; gap: 6px; padding: 0 4px 0 5px; border: 1px solid #777; background: #fff; }
.chev { margin-left: auto; }
.mark-buttons { margin: 9px 5px 0 6px; display: grid; grid-template-columns: repeat(3, 42px); grid-auto-rows: 42px; gap: 8px; }
.mbtn { border: 1px solid #bbb; border-radius: 5px; display: flex; flex-direction: column; align-items: center; justify-content: space-between; padding: 4px 0 1px; }
.mbtn-plain { justify-content: center; padding: 0; white-space: nowrap; }
.abc123 { font: 7.5px/8.7px "Liberation Sans", Arial, sans-serif; text-align: center; color: #444; display: block; }
.mark-buttons + .mark-row { margin-top: 7px; }
.mark-row { margin: 3px 5px 0 5px; display: flex; align-items: center; gap: 6px; }
.tiny { width: 16px; margin: 0; }
.legend li { height: 20px; display: flex; align-items: center; gap: 5px; padding-left: 4px; font: 11px "Liberation Sans", Arial, sans-serif; color: #555; }
.sw { display: block; width: 14px; height: 14px; flex: none; }
.c-blue { background: #1f77b4; } .c-orange { background: #ff7f0e; } .c-green { background: #2ca02c; } .c-red { background: #d62728; } .c-purple { background: #9467bd; }

.sheet { flex: 1; min-width: 0; padding: 8px 8px 0 0; display: flex; flex-direction: column; }
.shelf { height: 23px; margin-bottom: 9px; background: #fff; box-shadow: 1px 1px 1px #ccc; display: flex; }
.shelf-label { width: 94px; background: #f0f0f0; display: flex; align-items: center; gap: 4px; padding-left: 5px; }
.sheet-body { display: flex; justify-content: space-between; align-items: flex-start; margin-top: -1px; }
.canvas { width: 534px; height: 523px; background: #fff; }
.lbl { font: 11px "Liberation Sans", Arial, sans-serif; text-anchor: middle; }
.tip { fill: #777; }
.tip-b { fill: #111; font-weight: 700; }
.hidden-card { width: 60px; height: 58px; background: #fff; border-radius: 5px 5px 0 0; }
.hidden-card-head { height: 16px; background: #f0f0f0; border-radius: 5px 5px 0 0; }

.tabbar { height: 30px; display: flex; background: #e3e3e3; border-bottom: 1px solid #999; font-size: 12px; }
.tab { height: 29px; display: flex; align-items: center; }
.tab-ds { width: 121px; padding-left: 8px; gap: 4px; border-right: 1px solid #666; color: #777; background: #e9e9e9; }
.tab-s1 { width: 73px; padding-left: 6px; color: #777; background: #efefef; }
.tab-s2 { width: 72px; padding-left: 4px; font-weight: 700; color: #333; background: #fff; border-left: 1px solid #bbb; border-right: 1px solid #666; }
.tab-tools { display: flex; gap: 16px; align-items: center; padding-left: 8px; height: 29px; }

.statusbar { height: 18px; position: relative; display: flex; align-items: center; background: #f0f0f0; font-size: 11.8px; }
.st { line-height: 18px; white-space: nowrap; padding-top: 1px; }
.st1 { width: 65px; padding-left: 3px; }
.st2 { width: 119px; }
.st-right { margin-left: auto; display: flex; align-items: center; height: 18px; }
.st-sep { display: block; width: 1px; height: 18px; background: #dcdcdc; position: absolute; top: 0; }
.sp1 { left: 1000px; } .sp2 { left: 1127px; } .sp3 { left: 1154px; } .sp4 { left: 1181px; }
.nav { margin-right: 18px; }
.views { margin-right: 10px; }

.taskbar { height: 40px; display: flex; align-items: center; background: #070a0f; color: #ddd; }
.start { width: 48px; height: 40px; background: #000; display: flex; align-items: center; justify-content: center; }
.search { width: 344px; height: 40px; background: #353535; color: #8c8c8c; font-size: 14px; line-height: 40px; padding-left: 12px; }
.taskview { margin-left: 14px; width: 39px; }
.tb-sep { display: block; width: 1px; height: 24px; background: #3a3a3a; margin-right: 20px; }
.task { height: 40px; display: flex; align-items: center; gap: 4px; padding-left: 6px; font-size: 11.5px; border-bottom: 3px solid transparent; white-space: nowrap; color: #e4e4e4; }
.task.open { border-bottom-color: #76b9ed; }
.task.active { background: #34373a; border-bottom-color: #76b9ed; }
.t-dl { width: 104px; padding-left: 12px; margin-right: 7px; gap: 2px; }
.t-paint { width: 103px; gap: 9px; padding-left: 8px; }
.t-android { width: 54px; padding-left: 14px; }
.t-report { width: 102px; gap: 5px; padding-left: 6px; margin-right: 9px; }
.t-untitled { width: 102px; gap: 2px; padding-left: 6px; margin-right: 5px; }
.t-tableau { width: 110px; gap: 4px; padding-left: 8px; }
.tb-sep2 { display: block; width: 3px; height: 24px; border-left: 1px solid #444; border-right: 1px solid #444; margin-left: 15px; }
.desktop { margin-left: 11px; color: #bbb; font-size: 11.5px; }
.chevrons { align-self: flex-start; margin: 0 0 0 9px; font-size: 12px; line-height: 16px; color: #fff; }
.tray { display: flex; align-items: center; gap: 17px; margin-left: 14px; }
.clock { margin-left: 15px; width: 58px; display: flex; flex-direction: column; align-items: center; font-size: 12px; line-height: 18px; color: #eee; white-space: nowrap; }
.show-desktop { display: block; width: 1px; height: 40px; margin-left: 6px; background: #444; }

.showme {
  position: absolute; left: 1183px; top: 51px;
  width: 166px; height: 410px;
  background: #fff; border: 1px solid #aaa; border-radius: 5px 5px 0 0;
  box-shadow: 2px 2px 3px #999;
}
.sm-head { height: 21px; display: flex; align-items: center; gap: 7px; padding-left: 46px; position: relative; background: #dfeaf4; border-bottom: 1px solid #c6d2dd; border-radius: 5px 5px 0 0; font-size: 12px; }
.grip { position: absolute; left: 3px; top: 5px; }
.sm-grid { display: grid; grid-template-columns: repeat(3, 42px); grid-auto-rows: 28px; gap: 6px 11px; padding: 7px 0 0 8px; }
.th { border: 2px solid #e6e6e6; background: #fff; }
.th svg { width: 100%; height: 100%; }
.th.on { border-color: #adadad; }
.th.off { border-color: #e6e6e6; }
.th.sel { border-color: #5aaaf5; border-radius: 2px; box-shadow: 0 0 2px #5aaaf5; }
.t123 { font: 7.2px "Liberation Sans", Arial, sans-serif; fill: #333; letter-spacing: .2px; word-spacing: 1.5px; }
.t6 { font: 4.5px "Liberation Sans", Arial, sans-serif; fill: #555; text-anchor: middle; }
.sm-hint { padding: 7px 0 0 6px; line-height: 17px; letter-spacing: -.2px; }
.ind { padding-left: 6px; }
.hl-dim { background: #dbe9fb; color: inherit; }
.hl-mea { background: #cff0dc; color: inherit; }
```
